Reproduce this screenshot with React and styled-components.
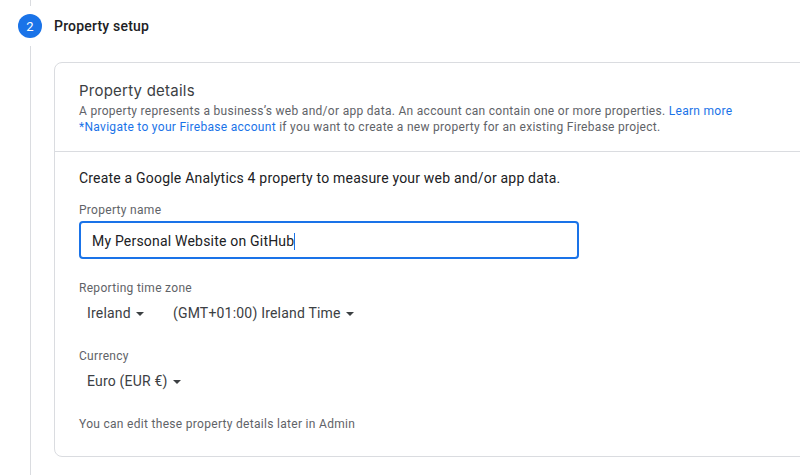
import React from "react";
import styled, { createGlobalStyle } from "styled-components";

const GlobalStyle = createGlobalStyle`
  * { box-sizing: border-box; }
  html, body { margin: 0; padding: 0; }
  body {
    background: #fff;
    font-family: Roboto, "Liberation Sans", sans-serif;
    overflow: hidden;
  }
`;

const Page = styled.main`
  display: flex;
  width: 800px;
  height: 475px;
  overflow: hidden;
`;

const StepRail = styled.div`
  display: flex;
  flex-direction: column;
  align-items: flex-start;
  width: 24px;
  margin-left: 18px;
`;

const RailLine = styled.div`
  width: 1px;
  margin-left: 12px;
  background: #dadce0;
  height: ${(p) => p.$height || "auto"};
  flex: ${(p) => (p.$height ? "none" : 1)};
`;

const StepNumber = styled.div`
  width: 24px;
  height: 24px;
  margin: 8px 0;
  border-radius: 50%;
  background: #1a73e8;
  color: #fff;
  font-size: 13px;
  line-height: 25px;
  text-align: center;
`;

const StepContent = styled.section`
  flex: 1;
  margin-left: 12px;
  padding-top: 16px;
`;

const StepTitle = styled.h1`
  margin: 0 0 26px;
  font-size: 14px;
  line-height: 20px;
  font-weight: 500;
  letter-spacing: 0.2px;
  color: #202124;
`;

const Card = styled.div`
  width: 780px;
  height: 395px;
  border: 1px solid #dadce0;
  border-radius: 8px;
`;

const CardHeader = styled.header`
  height: 89px;
  padding: 16px 24px 0;
  border-bottom: 1px solid #dadce0;
`;

const CardTitle = styled.h2`
  margin: 0;
  font-family: Inter, sans-serif;
  font-size: 15px;
  line-height: 24px;
  font-weight: 400;
  letter-spacing: 0.23px;
  color: #3c4043;
`;

const Description = styled.p`
  margin: 0;
  font-size: 12px;
  line-height: 16px;
  letter-spacing: 0.293px;
  color: #5f6368;
  white-space: nowrap;
`;

const Link = styled.a`
  color: #1a73e8;
  text-decoration: none;
`;

const CardBody = styled.div`
  padding: 16px 24px 0;
`;

const Intro = styled.p`
  margin: 0 0 14px;
  font-size: 14px;
  line-height: 20px;
  letter-spacing: 0.196px;
  color: #202124;
`;

const Field = styled.div`
  height: ${(p) => p.$height}px;
`;

const FieldLabel = styled.div`
  font-size: 12px;
  line-height: 16px;
  letter-spacing: 0.3px;
  color: #5f6368;
`;

const NameInput = styled.div`
  display: flex;
  align-items: center;
  width: 500px;
  height: 38px;
  margin-top: 3px;
  padding: 2px 0 0 11px;
  border: 2px solid #1a73e8;
  border-radius: 4px;
  font-size: 14px;
  letter-spacing: 0.2px;
  color: #202124;
`;

const Caret = styled.span`
  width: 1px;
  height: 17px;
  background: #1a73e8;
`;

const SelectRow = styled.div`
  display: flex;
  gap: 29px;
  padding: 7px 8px 0;
`;

const Select = styled.div`
  display: flex;
  align-items: center;
  gap: 5px;
  font-size: 14px;
  line-height: 20px;
  letter-spacing: 0.2px;
  color: #3c4043;
  white-space: nowrap;
`;

const ArrowIcon = styled.svg`
  display: block;
  margin-top: 2px;
`;

function Dropdown({ children }) {
  return (
    <Select>
      {children}
      <ArrowIcon width="8" height="4" viewBox="0 0 8 4">
        <path d="M0 0h8L4 4z" fill="#3c4043" />
      </ArrowIcon>
    </Select>
  );
}

export default function App() {
  return (
    <Page>
      <GlobalStyle />
      <StepRail>
        <RailLine $height="6px" />
        <StepNumber>2</StepNumber>
        <RailLine />
      </StepRail>
      <StepContent>
        <StepTitle>Property setup</StepTitle>
        <Card>
          <CardHeader>
            <CardTitle>Property details</CardTitle>
            <Description>
              A property represents a business’s web and/or app data. An account
              can contain one or more properties. <Link>Learn more</Link>
              <br />
              <Link>*Navigate to your Firebase account</Link> if you want to
              create a new property for an existing Firebase project.
            </Description>
          </CardHeader>
          <CardBody>
            <Intro>
              Create a Google Analytics 4 property to measure your web and/or
              app data.
            </Intro>
            <Field $height={78}>
              <FieldLabel>Property name</FieldLabel>
              <NameInput>
                My Personal Website on GitHub
                <Caret />
              </NameInput>
            </Field>
            <Field $height={68}>
              <FieldLabel>Reporting time zone</FieldLabel>
              <SelectRow>
                <Dropdown>Ireland</Dropdown>
                <Dropdown>(GMT+01:00) Ireland Time</Dropdown>
              </SelectRow>
            </Field>
            <Field $height={68}>
              <FieldLabel>Currency</FieldLabel>
              <SelectRow>
                <Dropdown>Euro (EUR €)</Dropdown>
              </SelectRow>
            </Field>
            <FieldLabel>You can edit these property details later in Admin</FieldLabel>
          </CardBody>
        </Card>
      </StepContent>
    </Page>
  );
}
